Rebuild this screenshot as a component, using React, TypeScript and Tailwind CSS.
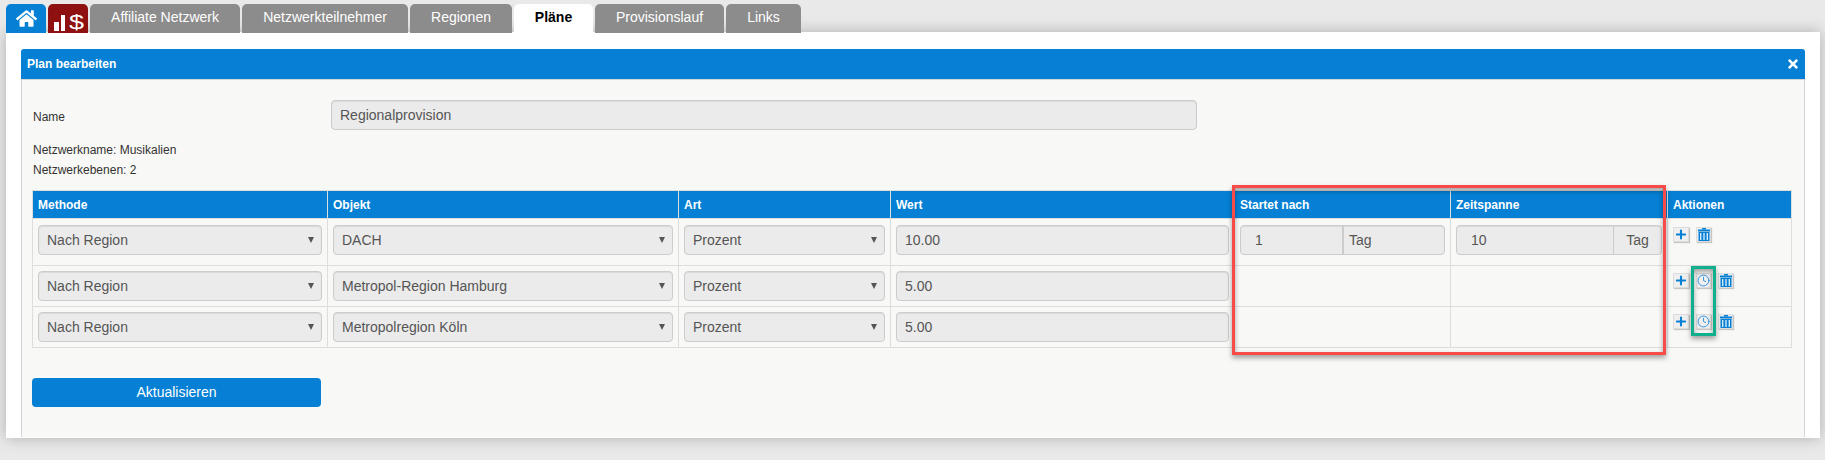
import React from "react";
import { Clock, Plus } from "lucide-react";
import { FaHome, FaTimes } from "react-icons/fa";

const tabs = [
  { label: "Affiliate Netzwerk", width: "w-[150px]" },
  { label: "Netzwerkteilnehmer", width: "w-[166px]" },
  { label: "Regionen", width: "w-[102px]" },
  { label: "Pläne", width: "w-[79px]", active: true },
  { label: "Provisionslauf", width: "w-[129px]" },
  { label: "Links", width: "w-[75px]" },
];

const headers = ["Methode", "Objekt", "Art", "Wert", "Startet nach", "Zeitspanne", "Aktionen"];

const rows = [
  { objekt: "DACH", wert: "10.00" },
  { objekt: "Metropol-Region Hamburg", wert: "5.00" },
  { objekt: "Metropolregion Köln", wert: "5.00" },
];

const fieldClass =
  "h-[30px] rounded-[4px] border border-[#cccccc] bg-[#ebebeb] text-[14px] text-[#555555] shadow-[inset_0_1px_1px_rgba(0,0,0,0.075)]";

const SelectBox = ({ value }: { value: string }) => (
  <div className={`flex items-center justify-between pl-2 pr-[7px] ${fieldClass}`}>
    <span>{value}</span>
    <svg width="6" height="6" viewBox="0 0 6 6">
      <polygon points="0,0 6,0 3,6" fill="#555555" />
    </svg>
  </div>
);

const TrashIcon = () => (
  <svg width="12" height="13" viewBox="0 0 12 13">
    <rect x="4" y="0" width="4" height="1.5" fill="#0580d4" />
    <rect x="0" y="1.5" width="12" height="2" fill="#0580d4" />
    <rect x="0.5" y="4" width="11" height="9" fill="#0580d4" />
    <rect x="2" y="5" width="1.4" height="7" fill="#d5e9f8" />
    <rect x="5.3" y="5" width="1.4" height="7" fill="#d5e9f8" />
    <rect x="8.6" y="5" width="1.4" height="7" fill="#d5e9f8" />
  </svg>
);

const IconButton = ({ children, wide }: { children: React.ReactNode; wide?: boolean }) => (
  <div
    className={`flex h-[15px] items-center justify-center border border-[#dddddd] bg-[#efefef] shadow-[1px_1px_1px_rgba(0,0,0,0.2)] ${
      wide ? "w-[16px]" : "w-[15px]"
    }`}
  >
    {children}
  </div>
);

const App = () => {
  return (
    <div className="relative h-[460px] overflow-hidden bg-[#e9e9e9] pt-1 font-['Liberation_Sans',Arial,sans-serif]">
      <nav className="relative z-10 -mb-px flex h-[29px] gap-[2px] pl-[6px]">
        <div className="flex w-[40px] items-center justify-center rounded-t-[5px] bg-[#0580d4] text-white">
          <FaHome size={21} />
        </div>
        <div className="flex w-[40px] items-end rounded-t-[5px] bg-[#8e1010] pb-[2px] pl-[6px] text-white">
          <span className="mr-[2px] h-[9px] w-[5px] bg-white" />
          <span className="mr-[4px] h-[16px] w-[4px] bg-white" />
          <span className="block origin-left scale-x-[1.35] text-[20px] leading-[18px]">$</span>
        </div>
        {tabs.map((tab) => (
          <div
            key={tab.label}
            className={`flex items-center justify-center rounded-t-[5px] pb-[2px] text-[14px] ${tab.width} ${
              tab.active ? "bg-white font-bold text-black" : "bg-[#8c8c8c] text-white"
            }`}
          >
            {tab.label}
          </div>
        ))}
      </nav>

      <main className="ml-[6px] mr-[5px] h-[406px] bg-white px-[15px] pt-[17px] shadow-[0_0_14px_rgba(0,0,0,0.25)]">
        <section className="h-[388px] bg-[#f8f8f6]">
          <header className="flex h-[30px] items-center justify-between rounded-t-[3px] bg-[#0580d4] pl-[6px] pr-[5px] text-[12px] font-bold text-white">
            <span>Plan bearbeiten</span>
            <FaTimes size={14} />
          </header>

          <div className="h-[358px] border-x border-t border-[#d4d4d4] px-[10px] pt-[20px] text-[12px] text-[#333333]">
            <div className="flex items-center">
              <span className="w-[299px] pl-px pt-[3px]">Name</span>
              <div className={`flex w-[866px] items-center px-2 ${fieldClass}`}>Regionalprovision</div>
            </div>
            <p className="mt-[10px] pl-px leading-[20px]">Netzwerkname: Musikalien</p>
            <p className="pl-px leading-[20px]">Netzwerkebenen: 2</p>

            <table className="mt-[10px] w-[1760px] table-fixed border-separate border-spacing-0">
              <colgroup>
                <col className="w-[296px]" />
                <col className="w-[351px]" />
                <col className="w-[212px]" />
                <col className="w-[344px]" />
                <col className="w-[216px]" />
                <col className="w-[217px]" />
                <col className="w-[124px]" />
              </colgroup>
              <thead>
                <tr>
                  {headers.map((header, i) => (
                    <th
                      key={header}
                      className={`h-[29px] border-y border-r border-[#dddddd] bg-[#0580d4] px-[5px] text-left text-[12px] font-bold text-white ${
                        i === 0 ? "border-l" : ""
                      }`}
                    >
                      {header}
                    </th>
                  ))}
                </tr>
              </thead>
              <tbody>
                {rows.map((row, i) => {
                  const cellClass = `border-b border-r border-[#dddddd] px-[5px] align-top ${
                    i === 0 ? "pb-[10px] pt-[6px]" : "pb-[5px] pt-[5px]"
                  }`;
                  return (
                    <tr key={row.objekt}>
                      <td className={`${cellClass} border-l`}>
                        <SelectBox value="Nach Region" />
                      </td>
                      <td className={cellClass}>
                        <SelectBox value={row.objekt} />
                      </td>
                      <td className={cellClass}>
                        <SelectBox value="Prozent" />
                      </td>
                      <td className={cellClass}>
                        <div className={`flex items-center px-2 ${fieldClass}`}>{row.wert}</div>
                      </td>
                      <td className={cellClass}>
                        {i === 0 && (
                          <div className={`flex items-center ${fieldClass}`}>
                            <span className="w-[101px] pl-[14px]">1</span>
                            <span className="flex h-full flex-1 items-center border-l-2 border-[#cccccc] pl-[5px]">Tag</span>
                          </div>
                        )}
                      </td>
                      <td className={cellClass}>
                        {i === 0 && (
                          <div className={`flex items-center ${fieldClass}`}>
                            <span className="w-[156px] pl-[14px]">10</span>
                            <span className="flex h-full flex-1 items-center justify-center border-l border-[#cccccc]">Tag</span>
                          </div>
                        )}
                      </td>
                      <td className={`${cellClass} ${i === 0 ? "!pt-[8px]" : "!pt-[7px]"}`}>
                        <div className="flex items-start gap-[7px]">
                          <IconButton wide>
                            <Plus size={15} strokeWidth={3.5} className="text-[#0580d4]" />
                          </IconButton>
                          {i > 0 && (
                            <IconButton>
                              <Clock size={13} strokeWidth={1.6} className="text-[#1a86e0]" />
                            </IconButton>
                          )}
                          <IconButton>
                            <TrashIcon />
                          </IconButton>
                        </div>
                      </td>
                    </tr>
                  );
                })}
              </tbody>
            </table>

            <button className="mt-[30px] h-[29px] w-[289px] rounded-[4px] bg-[#0580d4] text-[14px] text-white">
              Aktualisieren
            </button>
          </div>
        </section>
      </main>

      {/* Markierungen, die im Screenshot über der Tabelle liegen */}
      <div className="absolute left-[1232px] top-[185px] h-[170px] w-[434px] border-[3px] border-[#f94a4a] shadow-[0_3px_5px_rgba(0,0,0,0.35),inset_0_3px_5px_rgba(0,0,0,0.35)]" />
      <div className="absolute left-[1691px] top-[266px] h-[70px] w-[25px] border-[3px] border-[#10b08f] shadow-[0_3px_5px_rgba(0,0,0,0.35),inset_0_3px_5px_rgba(0,0,0,0.35)]" />
    </div>
  );
};

export default App;
